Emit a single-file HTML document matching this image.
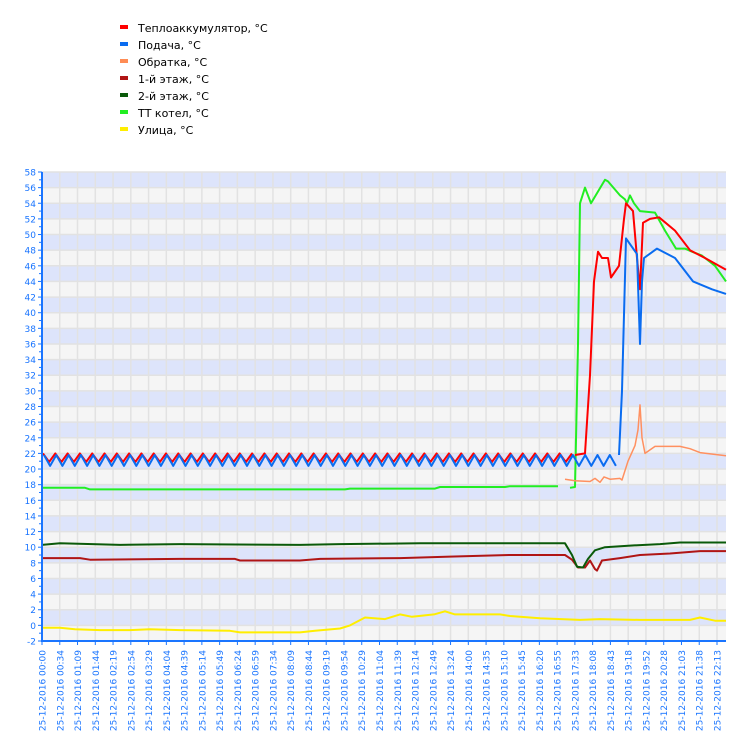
<!DOCTYPE html>
<html><head><meta charset="utf-8"><style>
html,body{margin:0;padding:0;background:#fff;width:750px;height:750px;overflow:hidden}
svg{display:block}
text{font-family:"DejaVu Sans","Liberation Sans",sans-serif}
</style></head><body>
<svg id="s" width="750" height="750" xmlns="http://www.w3.org/2000/svg">
<g font-size="11" fill="#000">
<rect x="120" y="25" width="8" height="4" fill="#ff0000"/><text x="138" y="32">Теплоаккумулятор, °C</text>
<rect x="120" y="42" width="8" height="4" fill="#0a6cf0"/><text x="138" y="49">Подача, °C</text>
<rect x="120" y="59" width="8" height="4" fill="#ff8c55"/><text x="138" y="66">Обратка, °C</text>
<rect x="120" y="76" width="8" height="4" fill="#b01515"/><text x="138" y="83">1-й этаж, °C</text>
<rect x="120" y="93" width="8" height="4" fill="#0a5a0a"/><text x="138" y="100">2-й этаж, °C</text>
<rect x="120" y="110" width="8" height="4" fill="#22ee22"/><text x="138" y="117">ТТ котел, °C</text>
<rect x="120" y="127" width="8" height="4" fill="#ffee00"/><text x="138" y="134">Улица, °C</text>
</g>
<g id="bg"></g><g id="grid"></g><g id="lines" fill="none" stroke-linejoin="round"></g><g id="axis"></g>
</svg>
<script>
var NS="http://www.w3.org/2000/svg";
function el(p,t,a,txt){var e=document.createElementNS(NS,t);for(var k in a)e.setAttribute(k,a[k]);if(txt!==undefined)e.textContent=txt;document.getElementById(p).appendChild(e);return e;}
var X0=42,X1=726,Y0=172,Y1=641;
function Y(v){return Y1-(v+2)*(Y1-Y0)/60;}
for(var v=-2;v<58;v+=2){var blue=((v+2)/2)%2==1;el("bg","rect",{x:X0,y:Y(v+2),width:X1-X0,height:Y(v)-Y(v+2),fill:blue?"#dde4fb":"#f5f5f5"});}
var labels="00:00 00:34 01:09 01:44 02:19 02:54 03:29 04:04 04:39 05:14 05:49 06:24 06:59 07:34 08:09 08:44 09:19 09:54 10:29 11:04 11:39 12:14 12:49 13:24 14:00 14:35 15:10 15:45 16:20 16:55 17:33 18:08 18:43 19:18 19:52 20:28 21:03 21:38 22:13".split(" ");
var dx=(717-42)/38;
for(var v=-2;v<=58;v+=2){el("grid","line",{x1:X0,x2:X1,y1:Y(v),y2:Y(v),stroke:"#e2e2e2","stroke-width":1.5});}
for(var i=0;i<labels.length;i++){var x=X0+i*dx;el("grid","line",{x1:x,x2:x,y1:Y0,y2:Y1,stroke:"#e2e2e2","stroke-width":1.5});
el("axis","line",{x1:x,x2:x,y1:Y1,y2:Y1+4,stroke:"#1a75ff","stroke-width":1});
var t=el("axis","text",{x:0,y:0,"font-size":"9",fill:"#1a75ff","text-anchor":"end",transform:"translate("+(x+3.5)+",650) rotate(-90)"},"25-12-2016  "+labels[i]);}
el("axis","line",{x1:X0,x2:X0,y1:Y0,y2:Y1+1,stroke:"#1a75ff","stroke-width":2});
el("axis","line",{x1:X0,x2:X1,y1:Y1,y2:Y1,stroke:"#1a75ff","stroke-width":2});
for(var v=-2;v<=58;v+=1){el("axis","line",{x1:X0-(v%2==0?4:3),x2:X0,y1:Y(v),y2:Y(v),stroke:"#1a75ff","stroke-width":1});
if(v%2==0)el("axis","text",{x:36,y:Y(v)+3.5,"font-size":"9",fill:"#1a75ff","text-anchor":"end"},String(v));}
function path(pts,col,w){var d="";for(var i=0;i<pts.length;i++){d+=(i?"L":"M")+pts[i][0].toFixed(1)+" "+Y(pts[i][1]).toFixed(1);}el("lines","path",{d:d,stroke:col,"stroke-width":w});}
function zig(x0,x1,lo,hi,ph){var p=[],per=12.3,x=x0,k=ph;while(x<x1){p.push([x,k%2?lo:hi]);x+=per/2;k++;}return p;}
path([[42,-0.3],[60,-0.3],[75,-0.5],[100,-0.6],[130,-0.6],[150,-0.5],[180,-0.6],[230,-0.7],[240,-0.9],[300,-0.9],[315,-0.7],[340,-0.4],[350,0],[365,1],[385,0.8],[400,1.4],[412,1.1],[434,1.4],[445,1.8],[455,1.4],[500,1.4],[510,1.2],[540,0.9],[580,0.7],[600,0.8],[640,0.7],[690,0.7],[700,1],[715,0.6],[726,0.6]],"#ffee00",2);
path([[42,8.6],[80,8.6],[90,8.4],[180,8.5],[235,8.5],[240,8.3],[300,8.3],[320,8.5],[400,8.6],[450,8.8],[510,9],[565,9],[572,8.4],[578,7.4],[585,7.4],[590,8.3],[595,7.2],[597,7],[602,8.3],[620,8.6],[640,9],[670,9.2],[700,9.5],[726,9.5]],"#b01515",2);
path([[42,10.3],[60,10.5],[120,10.3],[180,10.4],[300,10.3],[340,10.4],[420,10.5],[565,10.5],[572,9],[577,7.5],[583,7.4],[588,8.5],[595,9.6],[605,10],[630,10.2],[660,10.4],[680,10.6],[726,10.6]],"#0a5a0a",2);
path([[42,17.6],[85,17.6],[90,17.4],[345,17.4],[350,17.5],[435,17.5],[440,17.7],[505,17.7],[510,17.8],[558,17.8]],"#22ee22",2);
path([[570,17.6],[575,17.7],[578,36],[580,54],[585,56],[591,54],[605,57],[608,56.8],[620,55],[625,54.5],[627,54],[630,55],[634,54],[640,53],[655,52.8],[665,50.5],[676,48.2],[685,48.2],[692,47.8],[702,47.3],[715,46],[726,44]],"#22ee22",2);
path([[565,18.7],[575,18.5],[590,18.4],[595,18.8],[600,18.3],[604,19],[610,18.7],[620,18.8],[622,18.6],[628,21],[635,23],[638,25],[640,28.2],[642,24],[645,22],[655,22.9],[680,22.9],[690,22.6],[700,22.1],[726,21.7]],"#ff9060",1.5);
var rz=zig(43,575,20.9,22,0);path(rz,"#ff0000",2);
path([[575,21.8],[585,22],[590,32],[594,44],[598,47.8],[602,47],[608,47],[611,44.5],[619,46],[624,52],[626,54],[633,53],[637,47],[640,43],[643,51.5],[650,52],[659,52.2],[675,50.5],[690,48],[705,47],[726,45.5]],"#ff0000",2);
var bz=zig(44,620,20.4,21.8,0);path(bz,"#0a6cf0",2);
path([[619,21.8],[622,30],[626,49.5],[637,47.5],[640,36],[642,44],[644,47],[657,48.2],[675,47],[693,44],[712,43],[726,42.4]],"#0a6cf0",2);
</script>
</body></html>
